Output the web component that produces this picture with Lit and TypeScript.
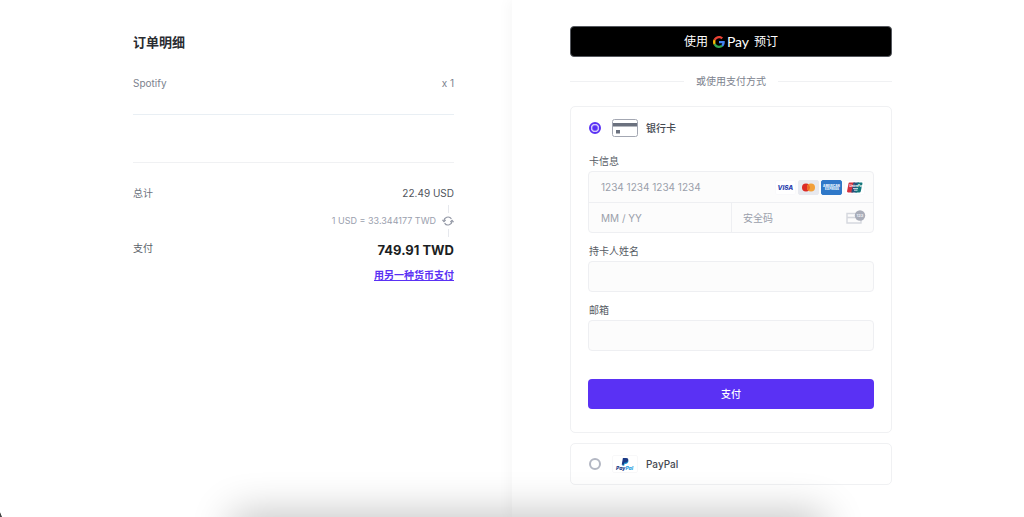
import { LitElement, html, css, svg } from "lit";
import { customElement, state } from "lit/decorators.js";

const cardIcon = html`<svg viewBox="0 0 26 18" width="26" height="18" aria-hidden="true">
  <rect x="0.5" y="0.5" width="25" height="17" rx="2" fill="#fff" stroke="#a3a7b2" />
  <rect x="1" y="4" width="24" height="3.5" fill="#6b717e" />
  <rect x="4" y="11" width="4" height="3.5" fill="#6b717e" />
</svg>`;

const paypalIcon = html`<svg viewBox="0 0 26 18" width="26" height="18" aria-hidden="true">
  <rect x="0.5" y="0.5" width="25" height="17" rx="1.5" fill="#fff" stroke="#f8f8f9" />
  <path d="M11.4 4.3h3.1c1.6 0 2.2 1 1.9 2.3-.4 1.7-1.4 2.4-3 2.4h-.8l-.4 1.8h-1.900z" fill="#1b9bd8" />
  <path d="M10.900 2.900h3.200c1.700 0 2.400.9 2.100 2.300-.3 1.700-1.500 2.500-3.100 2.500h-.9l-.4 2h-2.100z" fill="#1b3a86" />
  <text x="4" y="14.5" font-family="Inter, sans-serif" font-size="5" font-weight="800" font-style="italic" fill="#1b3a86">Pay<tspan fill="#2b9fe0">Pal</tspan></text>
</svg>`;

const refreshIcon = html`<svg viewBox="0 0 12 10" width="12" height="10" fill="none" stroke="#9297a4" stroke-width="1.1" aria-hidden="true">
  <path d="M2 5.2A4 4 0 0 1 9.4 2.9" />
  <path d="M10 4.8A4 4 0 0 1 2.6 7.1" />
  <path d="M0.4 3.9 2 5.6 3.7 3.9M8.3 6.1 10 4.4 11.6 6.1" />
</svg>`;

const gLogo = html`<svg viewBox="0 0 24 24" width="12" height="12" aria-hidden="true">
  <path fill="#4285f4" d="M23.5 12.3c0-.9-.1-1.5-.2-2.2H12v4.4h6.6c-.1 1.1-.9 2.8-2.5 3.9l3.7 2.9c2.3-2.2 3.7-5.2 3.7-9z" />
  <path fill="#34a853" d="M12 24c3.200 0 6-1.100 7.900-2.900l-3.800-2.900c-1 .7-2.400 1.200-4.100 1.200-3.200 0-5.900-2.100-6.800-5L1.300 17.400C3.300 21.300 7.300 24 12 24z" />
  <path fill="#fbbc05" d="M5.200 14.400c-.3-.7-.4-1.500-.4-2.400s.1-1.700.4-2.400l-3.900-3C.5 8.200 0 10.100 0 12s.5 3.800 1.300 5.400z" />
  <path fill="#ea4335" d="M12 4.600c2.300 0 3.800 1 4.700 1.800l3.400-3.300C18 1.200 15.200 0 12 0 7.300 0 3.300 2.700 1.300 6.600l3.900 3c.9-2.900 3.600-5 6.800-5z" />
</svg>`;

const brandFrame = (fill: string, stroke: string, body: unknown) => html`<svg viewBox="0 0 21 15" width="21" height="15" aria-hidden="true">
  <rect x="0.5" y="0.5" width="20" height="14" rx="1.5" fill=${fill} stroke=${stroke} />${body}
</svg>`;

const brands = [
  brandFrame("#fff", "#f9f9fb", svg`<text x="2.5" y="10" font-family="Inter, sans-serif" font-size="6.4" font-weight="800" font-style="italic" fill="#2b3fae">VISA</text>`),
  brandFrame("#e7e9ef", "#e7e9ef", svg`<circle cx="8" cy="7.5" r="4" fill="#dc2b26" /><circle cx="13" cy="7.5" r="4" fill="#f2a03a" /><path d="M10.5 4.4a4 4 0 0 1 0 6.2 4 4 0 0 1 0-6.2z" fill="#ee6a25" />`),
  brandFrame("#2f78c8", "#2f78c8", svg`<text x="10.5" y="7.2" text-anchor="middle" font-family="Inter, sans-serif" font-size="3" font-weight="900" fill="#e3effb">AMERICAN</text><text x="11" y="10.4" text-anchor="middle" font-family="Inter, sans-serif" font-size="3" font-weight="900" fill="#e3effb">EXPRESS</text>`),
  brandFrame("#fff", "#f9f9fb", svg`<path d="M5.5 2.5H11L8.8 12.5H4.2c-.9 0-1.3-.6-1.1-1.4L4.5 3.6c.1-.7.4-1.1 1-1.1z" fill="#d5313e" /><path d="M9.5 2.5H15L12.8 12.5H7.3z" fill="#27507c" /><path d="M13.5 2.5h4c.8 0 1.1.5.9 1.3l-1.6 7.5c-.2.8-.6 1.2-1.3 1.2h-4.2z" fill="#12777c" /><text x="5.2" y="6.8" font-family="Inter, sans-serif" font-size="3" font-weight="700" font-style="italic" fill="#fff">UnionPay</text><path d="M9 8.6h5M10 10.2h3.5" stroke="#fff" stroke-width=".8" />`),
];

const cvcIcon = html`<svg viewBox="0 0 20 15" width="20" height="15" aria-hidden="true">
  <path d="M1 3.5h14v9.5H1z" fill="none" stroke="#d5d8de" stroke-width="1.4" />
  <path d="M1 7.5h14" stroke="#d5d8de" stroke-width="1.6" />
  <circle cx="14" cy="5.5" r="5.2" fill="#a9adb9" />
  <text x="14" y="7" text-anchor="middle" font-family="Inter, sans-serif" font-size="4" font-weight="700" fill="#eceef2">123</text>
</svg>`;

@customElement("app-root")
export class AppRoot extends LitElement {
  @state() private method = "card";

  static styles = css`
    :host {
      display: block;
      position: relative;
      min-height: 100vh;
      overflow: hidden;
      background: #fff;
      color: #565b64;
      font: 10px/16px Inter, "Noto Sans CJK SC", sans-serif;
    }
    *, *::before, *::after { box-sizing: border-box; }
    svg { display: block; flex: none; }
    .page { display: grid; grid-template-columns: minmax(0, 1fr) minmax(0, 1fr); min-height: 100vh; }
    .summary { padding: 32px 58px 24px; display: flex; justify-content: flex-end; }
    .checkout { padding: 26px 58px 32px; box-shadow: -4px 0 12px rgba(0, 0, 0, 0.03); }
    .column { width: 100%; max-width: 322px; }
    .summary .column { max-width: 321px; }
    h1 { margin: 0; font-size: 13px; line-height: 20px; font-weight: 700; color: #2a2c31; }
    .row { display: flex; justify-content: space-between; }
    .item { margin-top: 23px; color: #7c828e; }
    .rule { height: 1px; margin: 0; border: 0; background: #e9eff4; }
    .first { margin-top: 23px; }
    .second { margin-top: 47px; background: #f0f1f3; }
    .total { margin-top: 22px; color: #6c727d; }
    .total-value { color: #50545c; }
    .rate { display: grid; grid-template-columns: auto 12px; justify-content: end; justify-items: center; align-items: center; column-gap: 6px; margin-top: 4px; font-size: 9px; color: #9aa0ae; }
    .tick { grid-column: 2; width: 1px; height: 8px; background: #e6e8ed; }
    .pay-row { margin-top: 3px; color: #5a5f69; }
    .pay-value { font-size: 13px; line-height: 20px; font-weight: 700; color: #1c1e23; }
    .switch { text-align: right; margin-top: 7px; }
    a { color: #5a31f4; font-weight: 700; text-decoration: underline; }
    button { font: inherit; border: 0; width: 100%; display: flex; align-items: center; justify-content: center; cursor: pointer; }
    .gpay { height: 31px; padding: 1px 0 0; border-radius: 4px; background: #000; border: 1px solid #55585e; color: #fff; font-size: 12px; gap: 5px; }
    .mark { display: flex; align-items: center; gap: 2px; font-family: Lato, sans-serif; font-size: 14px; }
    .or { display: flex; align-items: center; gap: 12px; margin: 16px 0 17px; color: #7c828e; }
    .or::before, .or::after { content: ""; flex: 1; height: 1px; background: #f0f1f3; }
    .panel { border: 1px solid #f0f1f3; border-radius: 5px; padding: 12px 17px; }
    .panel + .panel { margin-top: 10px; }
    .open { padding-bottom: 23px; }
    .choice { display: flex; align-items: center; gap: 11px; height: 18px; padding-left: 1px; color: #454951; font-weight: 500; cursor: pointer; }
    .choice span { margin-left: -3px; }
    .choice input { appearance: none; margin: 0; width: 12px; height: 12px; border: 2px solid #b3b7c3; border-radius: 50%; background: #fff; }
    .choice input:checked { border-color: #5a31f4; background: radial-gradient(circle, #5a31f4 0 2px, #fff 4px) padding-box; }
    .plain { padding-block: 11px; }
    .label { display: block; margin: 10px 0 2px; padding-left: 1px; }
    .label.lead { margin-top: 16px; }
    .box { border: 1px solid #eeeff2; border-radius: 4px; background: #fcfcfc; }
    .line { display: flex; align-items: center; height: 30px; padding: 0 12px; }
    .split { display: grid; grid-template-columns: minmax(0, 1fr) minmax(0, 1fr); border-top: 1px solid #eeeff2; }
    .split .line { height: 29px; }
    .split .line + .line { border-left: 1px solid #eeeff2; padding: 0 7px 0 11px; }
    .brands { display: flex; gap: 2px; margin-right: -4px; }
    input { font: inherit; color: #565b64; }
    .line input { flex: 1; min-width: 0; padding: 0; border: 0; outline: 0; background: none; }
    input::placeholder { color: #9a9fab; opacity: 1; }
    .text { display: block; width: 100%; height: 31px; padding: 0 11px; outline: 0; }
    .pay { height: 30px; margin-top: 28px; border-radius: 4px; background: #5a31f4; color: #fff; font-weight: 500; }
    .shade { position: absolute; left: 236px; right: 204px; top: 100%; height: 40px; box-shadow: 0 0 40px 4px rgba(0, 0, 0, 0.24); pointer-events: none; }
    .corner { position: absolute; left: 0; bottom: 0; width: 2px; height: 5px; background: linear-gradient(to top right, #444 40%, transparent 60%); pointer-events: none; }
    @media (max-width: 640px) {
      .page { grid-template-columns: 1fr; }
      .summary, .checkout { padding-inline: 20px; justify-content: center; }
      .checkout { display: flex; }
    }
  `;

  private choice(id: string, name: string, icon: unknown) {
    return html`<label class="choice">
      <input type="radio" name="method" value=${id} .checked=${this.method === id} @change=${() => (this.method = id)} />
      ${icon}<span>${name}</span>
    </label>`;
  }

  render() {
    return html`
      <div class="page">
        <section class="summary">
          <div class="column">
            <h1>订单明细</h1>
            <div class="row item"><span>Spotify</span><span>x 1</span></div>
            <hr class="rule first" />
            <hr class="rule second" />
            <div class="row total"><span>总计</span><span class="total-value">22.49 USD</span></div>
            <div class="rate">
              <i class="tick"></i>
              <span>1 USD = 33.344177 TWD</span>${refreshIcon}
              <i class="tick"></i>
            </div>
            <div class="row pay-row"><span>支付</span><strong class="pay-value">749.91 TWD</strong></div>
            <div class="switch"><a href="#currency">用另一种货币支付</a></div>
          </div>
        </section>
        <main class="checkout">
          <form class="column" @submit=${(e: Event) => e.preventDefault()}>
            <button class="gpay" type="button"><span>使用</span><span class="mark">${gLogo}Pay</span><span>预订</span></button>
            <div class="or">或使用支付方式</div>
            <div class="panel open">
              ${this.choice("card", "银行卡", cardIcon)}
              <label class="label lead" for="number">卡信息</label>
              <div class="box">
                <div class="line"><input id="number" inputmode="numeric" placeholder="1234 1234 1234 1234" /><span class="brands">${brands}</span></div>
                <div class="split">
                  <div class="line"><input aria-label="MM / YY" placeholder="MM / YY" /></div>
                  <div class="line"><input aria-label="安全码" placeholder="安全码" />${cvcIcon}</div>
                </div>
              </div>
              <label class="label" for="holder">持卡人姓名</label>
              <input class="box text" id="holder" />
              <label class="label" for="email">邮箱</label>
              <input class="box text" id="email" type="email" />
              <button class="pay" type="submit">支付</button>
            </div>
            <div class="panel plain">${this.choice("paypal", "PayPal", paypalIcon)}</div>
          </form>
        </main>
      </div>
      <div class="shade"></div>
      <div class="corner"></div>
    `;
  }
}
